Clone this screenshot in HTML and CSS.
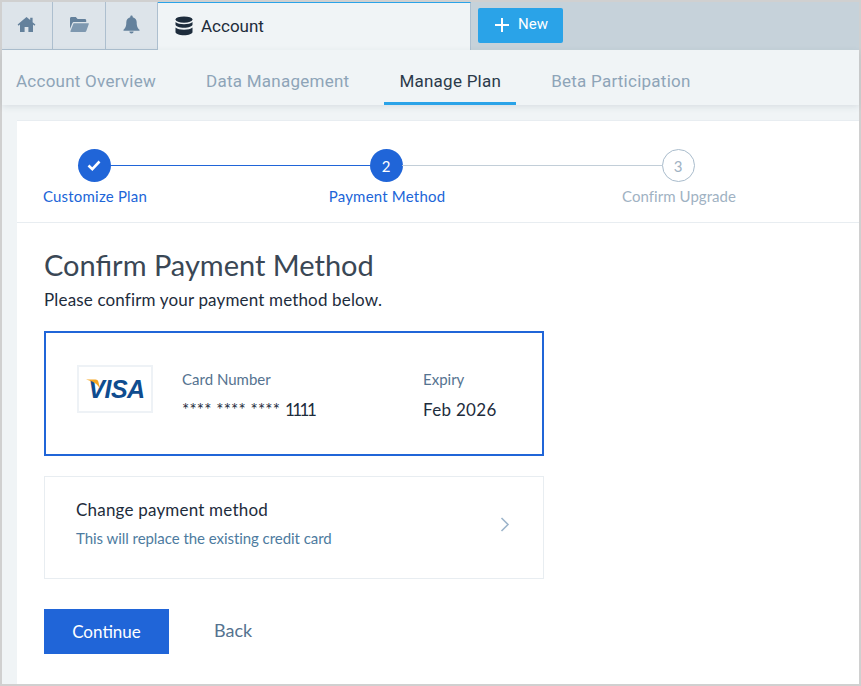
FILE: index.html
```html
<!DOCTYPE html>
<html>
	<head>
		<meta charset="UTF-8">
		<title>Account</title>
		<link rel="stylesheet" href="styles.css">
	</head>
	<body>
		<div class="frame">
			<div class="tabbar">
				<a class="icon-tab">
					<svg width="19" height="17" viewBox="0 0 19 17"><path fill="#64819c" d="M9.5 1 0.6 8.6l1 1.1L3 8.5V16h4.6v-5h3.8v5H16V8.5l1.4 1.2 1-1.1L15.6 6.2V1.8h-2.4v2.3z"/></svg>
				</a>
				<a class="icon-tab">
					<svg width="20" height="17" viewBox="0 0 20 17"><path fill="#64819c" d="M1 2.5C1 1.7 1.6 1 2.4 1h4.4l1.8 2h7.2c.8 0 1.4.6 1.4 1.4V6H5.2c-.9 0-1.600.5-1.900 1.300L1 12.800z"/><path fill="#7e98b0" d="M4.600 7.200h14.600c.5 0 .8.400.6.900l-2.500 7c-.2.500-.7.900-1.300.9H2.200c-.6 0-.9-.5-.7-1z"/></svg>
				</a>
				<a class="icon-tab">
					<svg width="17" height="19" viewBox="0 0 17 19"><path fill="#64819c" d="M8.5 0.5c-.7 0-1.2.5-1.2 1.2v.6C4.900 2.800 3.300 4.800 3.300 7.200c0 4.300-1 5.800-2.800 7.600v1h16v-1c-1.800-1.800-2.800-3.300-2.800-7.600 0-2.400-1.600-4.400-4-4.900v-.6c0-.7-.5-1.200-1.200-1.200zM6.400 16.600c0 1.100.9 2 2.100 2s2.100-.9 2.100-2z"/></svg>
				</a>
				<div class="active-tab">
					<svg width="18" height="20" viewBox="0 0 18 20"><g fill="#1d2c3c"><ellipse cx="9" cy="3.600" rx="8.500" ry="3.200"/><path d="M.5 6v2.600c0 1.800 3.800 3.200 8.500 3.200s8.500-1.400 8.500-3.200V6c-1.600 1.500-5 2.200-8.500 2.200S2.100 7.500.5 6z"/><path d="M.5 11.600v4.400c0 1.800 3.800 3.300 8.500 3.300s8.500-1.500 8.500-3.300v-4.400c-1.600 1.500-5 2.200-8.500 2.200s-6.900-.7-8.500-2.200z"/></g></svg>
					<span>Account</span>
				</div>
				<a class="new-btn">
					<svg width="14" height="14" viewBox="0 0 14 14"><path fill="#fff" d="M6 0h2v6h6v2H8v6H6V8H0V6h6z"/></svg>
					<span>New</span>
				</a>
			</div>
			<div class="subnav">
				<a>Account Overview</a>
				<a>Data Management</a>
				<a class="ac">Manage Plan</a>
				<a>Beta Participation</a>
			</div>
			<div class="panel">
				<div class="steps">
					<div class="step done">
						<div class="dot">
							<svg width="14" height="11" viewBox="0 0 14 11"><path fill="none" stroke="#fff" stroke-width="2.600" d="M1.500 5.500l3.800 3.600 7.200-7.600"/></svg>
						</div>
						<div class="step-name">Customize Plan</div>
					</div>
					<div class="step current">
						<div class="dot">2</div>
						<div class="step-name">Payment Method</div>
					</div>
					<div class="step todo">
						<div class="dot">3</div>
						<div class="step-name">Confirm Upgrade</div>
					</div>
				</div>
				<div class="content">
					<h1>Confirm Payment Method</h1>
					<p class="intro">Please confirm your payment method below.</p>
					<div class="card-box">
						<div class="visa">
							<svg class="visa-tail" width="16" height="10" viewBox="0 0 16 10"><path fill="#f5a623" d="M0 .5h9.500c1.500 0 2.400.8 2.800 2l1.700 7C11.500 5 7 2 0 .5z"/></svg>
							<span>VISA</span>
						</div>
						<div class="card-col number">
							<div class="label">Card Number</div>
							<div class="value"><span class="stars">**** **** ****</span> <span class="last">1111</span></div>
						</div>
						<div class="card-col">
							<div class="label">Expiry</div>
							<div class="value">Feb 2026</div>
						</div>
					</div>
					<div class="change-box">
						<div>
							<div class="change-title">Change payment method</div>
							<div class="change-sub">This will replace the existing credit card</div>
						</div>
						<svg class="chevron" width="10" height="15" viewBox="0 0 10 15"><path fill="none" stroke="#9db5cb" stroke-width="1.600" d="M1.500 1l6.500 6.500L1.500 14"/></svg>
					</div>
					<div class="actions">
						<a class="btn-continue">Continue</a>
						<a class="btn-back">Back</a>
					</div>
				</div>
			</div>
		</div>
	</body>
</html>
```

FILE: styles.css
```css
* {
	margin: 0;
	padding: 0;
	box-sizing: border-box;
}
html, body {
	height: 100%;
	overflow: hidden;
}
body {
	background: #d0d0d0;
	font-family: "Roboto", sans-serif;
}
.frame {
	height: 682px;
	margin: 2px 2px 0 2px;
	background: #f0f4f6;
	display: flex;
	flex-direction: column;
}
.tabbar {
	height: 48px;
	background: #c6d2da;
	display: flex;
	flex: none;
}
.icon-tab {
	width: 52px;
	height: 48px;
	background: #dde4ea;
	border-right: 1px solid #adbfcf;
	border-bottom: 1px solid #adbfcf;
	display: flex;
	align-items: center;
	justify-content: center;
	padding: 0 1px 3px 0;
}
.icon-tab:first-child {
	width: 51px;
}
.icon-tab:nth-child(2) {
	width: 53px;
}
.active-tab {
	width: 313px;
	height: 48px;
	background: #f0f4f6;
	border-top: 1px solid #2aa3e8;
	border-right: 1px solid #adbfcf;
	display: flex;
	align-items: center;
	padding: 0 0 2px 17px;
	gap: 8px;
	font-size: 17px;
	color: #1d2c3c;
}
.new-btn {
	width: 85px;
	height: 35px;
	margin: 6px 0 0 7px;
	background: #2aa3e8;
	border-radius: 2px;
	color: #fff;
	font-size: 15px;
	display: flex;
	align-items: center;
	gap: 9px;
	padding: 0 0 4px 17px;
}
.new-btn svg {
	margin-top: 3px;
}
.subnav {
	height: 55px;
	flex: none;
	display: flex;
	padding-left: 14px;
	gap: 50px;
	font-size: 17px;
	color: #8ea4b8;
	letter-spacing: .25px;
	box-shadow: 0 2px 6px rgba(60, 80, 100, .12);
	position: relative;
}
.subnav a {
	line-height: 63px;
	height: 55px;
}
.subnav a.ac {
	color: #2b3a4a;
	margin: 0 -15px;
	padding: 0 15px;
	border-bottom: 3px solid #2aa3e8;
}
.panel {
	flex: 1;
	margin: 15px 0 0 15px;
	background: #fff;
	border-top: 1px solid #e8edf1;
	font-family: "Lato", sans-serif;
}
.steps {
	height: 102px;
	border-bottom: 1px solid #e8edf1;
	display: flex;
	gap: 176px;
	padding: 28px 0 0 19px;
}
.step {
	width: 116px;
	position: relative;
	display: flex;
	flex-direction: column;
	align-items: center;
	gap: 4px;
}
.step:not(:last-child)::after {
	content: "";
	position: absolute;
	left: 74px;
	top: 16px;
	width: 260px;
	height: 1px;
	background: #c2ced8;
}
.step.done::after {
	background: #2065d8;
}
.dot {
	width: 33px;
	height: 33px;
	border-radius: 50%;
	background: #2065d8;
	color: #fff;
	font-size: 15px;
	font-weight: 400;
	display: flex;
	align-items: center;
	justify-content: center;
}
.step-name {
	font-size: 15px;
	line-height: 20px;
	white-space: nowrap;
	color: #2065d8;
	letter-spacing: .2px;
	padding-left: 2px;
}
.step.todo .dot {
	background: #fff;
	border: 1px solid #a9bccc;
	color: #9fb2c3;
}
.step.todo .step-name {
	color: #9fb2c3;
	letter-spacing: .05px;
}
.content {
	padding: 24px 0 0 27px;
	width: 527px;
}
h1 {
	font-size: 29px;
	font-weight: 400;
	line-height: 36px;
	color: #3a4755;
}
.intro {
	font-size: 17px;
	letter-spacing: .16px;
	line-height: 20px;
	margin-top: 7px;
	color: #1d2c3c;
}
.card-box {
	height: 125px;
	margin-top: 21px;
	border: 2px solid #2065d8;
	display: flex;
	align-items: center;
	padding-left: 31px;
}
.visa {
	width: 76px;
	height: 48px;
	margin-top: -9px;
	border: 2px solid #eef2f6;
	position: relative;
	text-align: center;
	font-family: "Liberation Sans", sans-serif;
	font-size: 25px;
	font-weight: 700;
	font-style: italic;
	line-height: 44px;
	color: #0f4c8f;
	letter-spacing: -.5px;
	padding-left: 3px;
}
.visa-tail {
	position: absolute;
	left: 7px;
	top: 12px;
}
.card-col {
	display: flex;
	flex-direction: column;
	gap: 11px;
	margin-top: 4px;
}
.card-col.number {
	width: 241px;
	margin-left: 29px;
}
.label {
	font-size: 15px;
	line-height: 18px;
	color: #557390;
}
.value {
	font-size: 17px;
	letter-spacing: .3px;
	line-height: 22px;
	color: #1d2c3c;
}
.stars {
	font-size: 17px;
	letter-spacing: .2px;
}
.last {
	letter-spacing: -2.5px;
}
.change-box {
	height: 103px;
	margin-top: 20px;
	border: 1px solid #e8edf1;
	display: flex;
	align-items: center;
	justify-content: space-between;
	padding: 0 33px 10px 31px;
}
.chevron {
	margin-top: 10px;
	margin-bottom: 6px;
}
.change-title {
	font-size: 17px;
	letter-spacing: .2px;
	line-height: 22px;
	color: #1d2c3c;
}
.change-sub {
	font-size: 15px;
	letter-spacing: -.05px;
	line-height: 18px;
	margin-top: 8px;
	color: #4d7ba0;
}
.actions {
	margin-top: 30px;
	display: flex;
	align-items: center;
	gap: 45px;
}
.btn-continue {
	width: 125px;
	height: 45px;
	background: #2065d8;
	color: #fff;
	font-size: 17px;
	line-height: 45px;
	text-align: center;
}
.btn-back {
	font-size: 18px;
	color: #557390;
	padding-bottom: 4px;
}
```
